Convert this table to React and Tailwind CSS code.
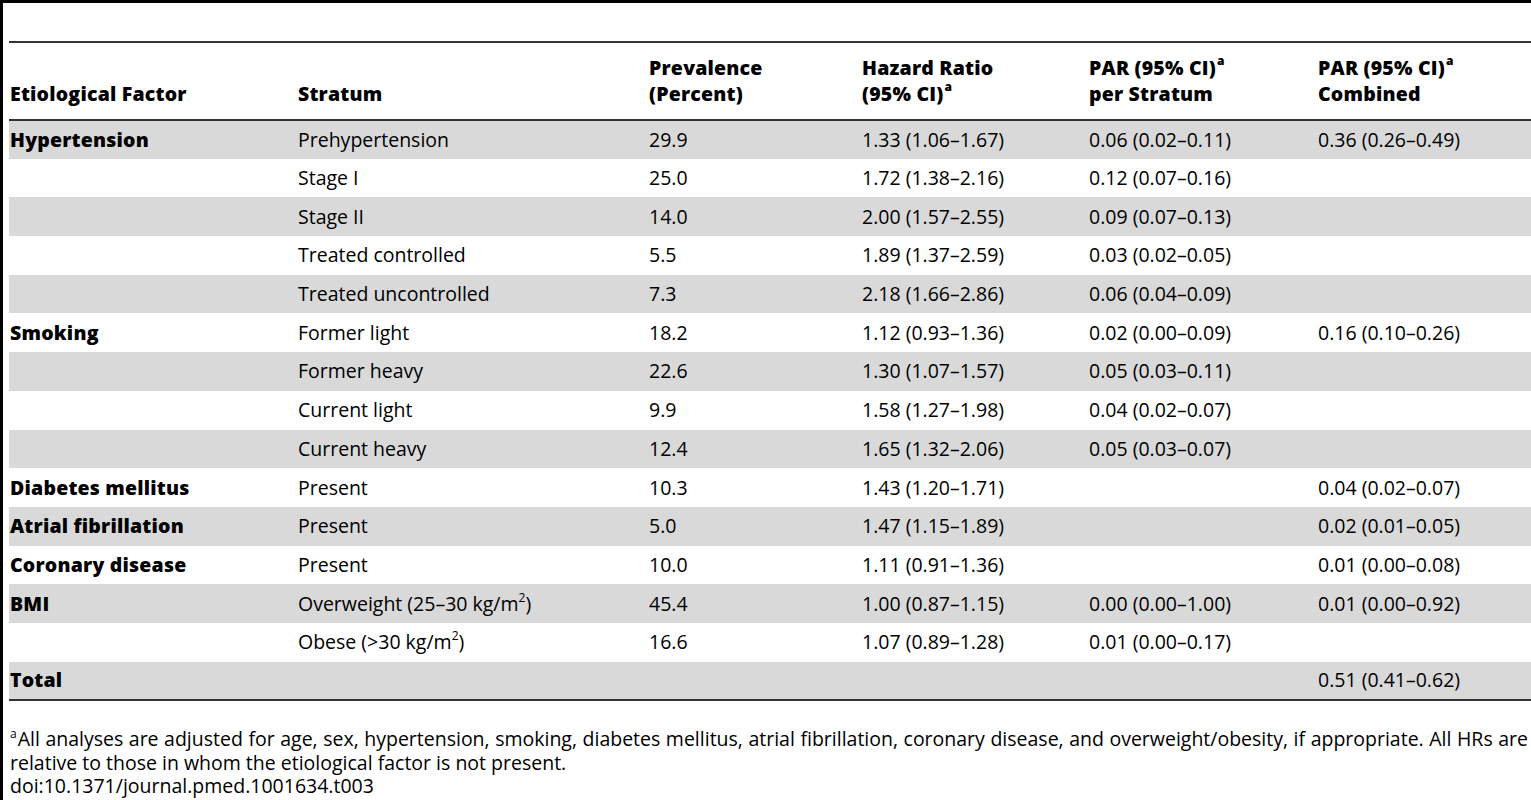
import React from "react";

const rows = [
  ["Hypertension", "Prehypertension", "29.9", "1.33 (1.06–1.67)", "0.06 (0.02–0.11)", "0.36 (0.26–0.49)"],
  ["", "Stage I", "25.0", "1.72 (1.38–2.16)", "0.12 (0.07–0.16)", ""],
  ["", "Stage II", "14.0", "2.00 (1.57–2.55)", "0.09 (0.07–0.13)", ""],
  ["", "Treated controlled", "5.5", "1.89 (1.37–2.59)", "0.03 (0.02–0.05)", ""],
  ["", "Treated uncontrolled", "7.3", "2.18 (1.66–2.86)", "0.06 (0.04–0.09)", ""],
  ["Smoking", "Former light", "18.2", "1.12 (0.93–1.36)", "0.02 (0.00–0.09)", "0.16 (0.10–0.26)"],
  ["", "Former heavy", "22.6", "1.30 (1.07–1.57)", "0.05 (0.03–0.11)", ""],
  ["", "Current light", "9.9", "1.58 (1.27–1.98)", "0.04 (0.02–0.07)", ""],
  ["", "Current heavy", "12.4", "1.65 (1.32–2.06)", "0.05 (0.03–0.07)", ""],
  ["Diabetes mellitus", "Present", "10.3", "1.43 (1.20–1.71)", "", "0.04 (0.02–0.07)"],
  ["Atrial fibrillation", "Present", "5.0", "1.47 (1.15–1.89)", "", "0.02 (0.01–0.05)"],
  ["Coronary disease", "Present", "10.0", "1.11 (0.91–1.36)", "", "0.01 (0.00–0.08)"],
  ["BMI", "overweight", "45.4", "1.00 (0.87–1.15)", "0.00 (0.00–1.00)", "0.01 (0.00–0.92)"],
  ["", "obese", "16.6", "1.07 (0.89–1.28)", "0.01 (0.00–0.17)", ""],
  ["Total", "", "", "", "", "0.51 (0.41–0.62)"],
];

const widths = ["w-[289px]", "w-[351px]", "w-[213px]", "w-[227px]", "w-[229px]", "w-[213px]"];

// superscript footnote marker
const Sup = () => (
  <span className="inline-block align-top text-[12px] leading-[14px] ml-px -mt-[1px]">a</span>
);

function stratum(s) {
  if (s === "overweight")
    return (
      <>
        Overweight (25–30 kg/m<span className="inline-block align-top text-[12px] leading-[14px]">2</span>)
      </>
    );
  if (s === "obese")
    return (
      <>
        Obese (&gt;30 kg/m<span className="inline-block align-top text-[12px] leading-[14px]">2</span>)
      </>
    );
  return s;
}

export default function App() {
  const th = "text-left align-bottom font-extrabold tracking-[0.2px] pt-[12px] pb-[12px]";
  return (
    <div
      className="w-[1531px] h-[800px] bg-white text-black border-l-[3px] border-t-[3px] border-black overflow-hidden"
      style={{ fontFamily: '"Open Sans", sans-serif' }}
    >
      <div className="pl-[6px] pt-[38px]">
        <table className="border-collapse table-fixed w-[1522px] text-[19.5px] leading-[26px]">
          <thead>
            <tr className="border-t-2 border-b-2 border-[#333]">
              <th className={`${widths[0]} ${th} pl-px`}>Etiological Factor</th>
              <th className={`${widths[1]} ${th}`}>Stratum</th>
              <th className={`${widths[2]} ${th}`}>
                Prevalence
                <br />
                (Percent)
              </th>
              <th className={`${widths[3]} ${th}`}>
                Hazard Ratio
                <br />
                (95% CI)<Sup />
              </th>
              <th className={`${widths[4]} ${th}`}>
                PAR (95% CI)<Sup />
                <br />
                per Stratum
              </th>
              <th className={`${widths[5]} ${th}`}>
                PAR (95% CI)<Sup />
                <br />
                Combined
              </th>
            </tr>
          </thead>
          <tbody className="border-b-2 border-[#333]">
            {rows.map((r, i) => (
              <tr key={i} className={`h-[38.7px] ${i % 2 === 0 ? "bg-[#d9d9d9]" : "bg-white"}`}>
                <td className="pl-px font-extrabold tracking-[0.2px] align-middle">{r[0]}</td>
                <td className="align-middle">{stratum(r[1])}</td>
                <td className="align-middle">{r[2]}</td>
                <td className="align-middle">{r[3]}</td>
                <td className="align-middle">{r[4]}</td>
                <td className="align-middle">{r[5]}</td>
              </tr>
            ))}
          </tbody>
        </table>
        <p className="pl-px pt-[26px] pr-[3px] text-[19.5px] leading-[23.5px] text-justify">
          <span className="inline-block align-top text-[12px] leading-[14px] mr-px">a</span>All analyses are adjusted for age, sex, hypertension, smoking, diabetes mellitus, atrial fibrillation, coronary disease, and overweight/obesity, if appropriate. All HRs are relative to those in whom the etiological factor is not present.
        </p>
        <p className="pl-px text-[19.5px] leading-[23.5px]">doi:10.1371/journal.pmed.1001634.t003</p>
      </div>
    </div>
  );
}
